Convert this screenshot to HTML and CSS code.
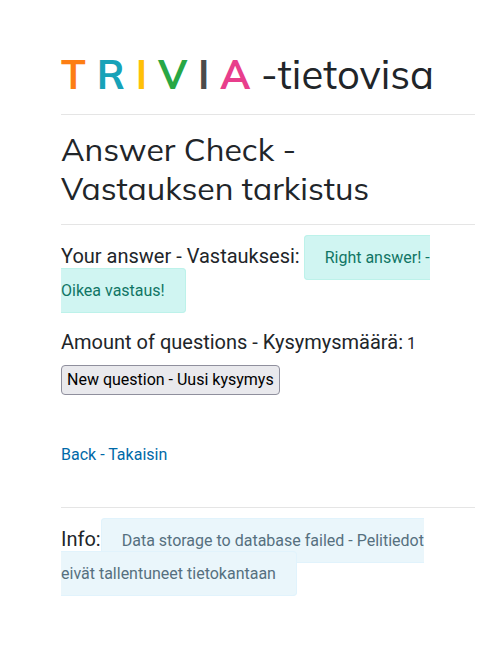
FILE: index.html
```html
<!DOCTYPE html>
<html lang="fi">
<head>
<meta charset="utf-8">
<title>TRIVIA-tietovisa</title>
<link rel="stylesheet" href="styles.css">
</head>
<body>
<main class="container">
<h1><b class="brand"><span class="orange">T</span> <span class="cyan">R</span> <span class="yellow">I</span> <span class="green">V</span> <span class="gray">I</span> <span class="pink">A</span></b> <span class="suffix">-tietovisa</span></h1>
<hr>
<h2>Answer Check -<br>Vastauksen tarkistus</h2>
<hr>
<p class="answer"><span class="lead">Your answer - Vastauksesi:</span> <span class="alert success">Right answer! -<br>Oikea vastaus!</span></p>
<p class="amount"><span class="lead">Amount of questions - Kysymysmäärä:</span> 1</p>
<button class="next" type="button">New question - Uusi kysymys</button>
<p class="back"><a href="#">Back - Takaisin</a></p>
<hr>
<p class="info"><span class="lead">Info:</span><span class="alert notice">Data storage to database failed - Pelitiedot<br>eivät tallentuneet tietokantaan</span></p>
</main>
</body>
</html>
```
FILE: styles.css
```css
* { box-sizing: border-box; }
body { margin: 0; background: #fff; color: #212529; font: 16px/24px Roboto, sans-serif; }
.container { padding: 50px 24px 40px 61px; }
h1, h2 { margin: 0; font-family: Mulish, Muli, Nunito, Lato, sans-serif; font-weight: 400; }
h1 { font-size: 40px; line-height: 48px; white-space: nowrap; }
h2 { margin-top: -1px; font-size: 32px; line-height: 39px; }
hr { margin: 16px 0; border: 0; border-top: 1px solid rgba(0, 0, 0, .1); }
p { margin: 0; }
.orange { color: #fd7e14; }
.cyan { color: #17a2b8; }
.yellow { color: #ffc107; }
.green { color: #28a745; }
.gray { color: #4b4b4b; }
.pink { color: #e83e8c; }
.lead { font-size: 20px; }
.alert { padding: 12px 20px; border: 1px solid; border-radius: 4px; }
.success { color: #107565; background: #d0f5f2; border-color: #bdf2ea; }
.notice { color: #56707f; background: #eaf6fb; border-color: #e1f3fc; }
.answer, .info { margin-top: -1px; line-height: 33px; }
.amount { margin-top: 19px; line-height: 33px; }
.next { display: block; margin-top: 5px; height: 30px; padding: 0 5px 2px; font: 16px Roboto, sans-serif; color: #000; background: #e9e9ed; border: 1px solid #8f8f9d; border-radius: 4px; }
.back { margin-top: 48px; margin-bottom: 40px; }
.back a { color: #0069a8; text-decoration: none; }
```
